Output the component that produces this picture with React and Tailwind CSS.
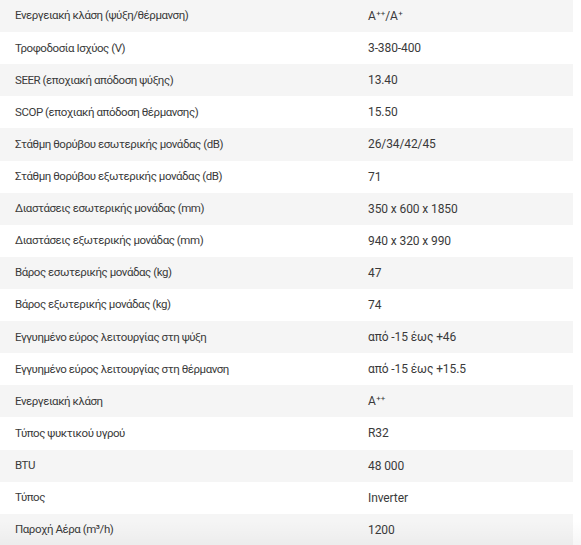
const Sup = ({ children }) => <sup className="text-[8px] ml-[0.5px]">{children}</sup>;

const rows = [
  ["Ενεργειακή κλάση (ψύξη/θέρμανση)", <>A<Sup>++</Sup>/A<Sup>+</Sup></>],
  ["Τροφοδοσία Ισχύος (V)", "3-380-400"],
  ["SEER (εποχιακή απόδοση ψύξης)", "13.40"],
  ["SCOP (εποχιακή απόδοση θέρμανσης)", "15.50"],
  ["Στάθμη θορύβου εσωτερικής μονάδας (dB)", "26/34/42/45"],
  ["Στάθμη θορύβου εξωτερικής μονάδας (dB)", "71"],
  ["Διαστάσεις εσωτερικής μονάδας (mm)", "350 x 600 x 1850"],
  ["Διαστάσεις εξωτερικής μονάδας (mm)", "940 x 320 x 990"],
  ["Βάρος εσωτερικής μονάδας (kg)", "47"],
  ["Βάρος εξωτερικής μονάδας (kg)", "74"],
  ["Εγγυημένο εύρος λειτουργίας στη ψύξη", "από -15 έως +46"],
  ["Εγγυημένο εύρος λειτουργίας στη θέρμανση", "από -15 έως +15.5"],
  ["Ενεργειακή κλάση", <>A<Sup>++</Sup></>],
  ["Τύπος ψυκτικού υγρού", "R32"],
  ["BTU", "48 000"],
  ["Τύπος", "Inverter"],
  ["Παροχή Αέρα (m³/h)", "1200"],
];

export default function App() {
  return (
    <div className="bg-white w-[581px] h-[545px] overflow-hidden relative">
      <div className="w-[573px]">
        {rows.map(([k, v], i) => (
          <div
            key={i}
            className={`flex h-[32.12px] items-center text-[#3a3a3a] ${i % 2 === 0 ? "bg-[#f5f5f5]" : "bg-white"}`}
            style={{ fontFamily: "Roboto, 'Noto Sans', sans-serif" }}
          >
            <div className="w-[353px] pl-[15px] truncate text-[11.5px] tracking-[-0.45px]">{k}</div>
            <div className="flex-1 pl-[15px] text-[12px] tracking-[-0.1px]">{v}</div>
          </div>
        ))}
      </div>
      <div className="absolute left-0 right-0 bottom-0 h-[24px] bg-gradient-to-b from-transparent to-[rgba(0,0,0,0.035)] pointer-events-none" />
    </div>
  );
}
